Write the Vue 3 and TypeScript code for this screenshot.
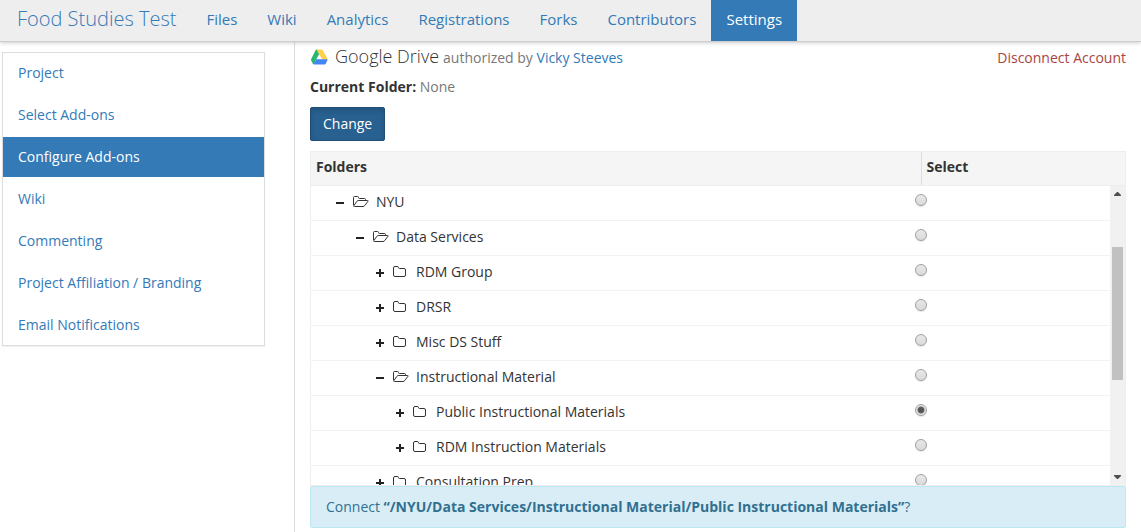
<script setup lang="ts">
import { computed, ref } from 'vue'

interface Folder {
  name: string
  path: string
  level: number
  open: boolean
}

const tabs: string[] = ['Files', 'Wiki', 'Analytics', 'Registrations', 'Forks', 'Contributors', 'Settings']
const activeTab = 'Settings'

const sections: string[] = [
  'Project',
  'Select Add-ons',
  'Configure Add-ons',
  'Wiki',
  'Commenting',
  'Project Affiliation / Branding',
  'Email Notifications',
]
const activeSection = 'Configure Add-ons'

const folders: Folder[] = [
  { name: 'NYU', path: '/NYU', level: 1, open: true },
  { name: 'Data Services', path: '/NYU/Data Services', level: 2, open: true },
  { name: 'RDM Group', path: '/NYU/Data Services/RDM Group', level: 3, open: false },
  { name: 'DRSR', path: '/NYU/Data Services/DRSR', level: 3, open: false },
  { name: 'Misc DS Stuff', path: '/NYU/Data Services/Misc DS Stuff', level: 3, open: false },
  { name: 'Instructional Material', path: '/NYU/Data Services/Instructional Material', level: 3, open: true },
  {
    name: 'Public Instructional Materials',
    path: '/NYU/Data Services/Instructional Material/Public Instructional Materials',
    level: 4,
    open: false,
  },
  {
    name: 'RDM Instruction Materials',
    path: '/NYU/Data Services/Instructional Material/RDM Instruction Materials',
    level: 4,
    open: false,
  },
  { name: 'Consultation Prep', path: '/NYU/Data Services/Consultation Prep', level: 3, open: false },
]

const selected = ref<string>(folders[6].path)
const quotedPath = computed<string>(() => `“${selected.value}”`)
</script>

<template>
  <div class="page">
    <header class="navbar">
      <a class="project-title" href="#">Food Studies Test</a>
      <nav class="tabs">
        <a v-for="tab in tabs" :key="tab" href="#" class="tab" :class="{ active: tab === activeTab }">{{ tab }}</a>
      </nav>
    </header>

    <div class="columns">
      <aside class="side">
        <nav class="side-nav">
          <a
            v-for="section in sections"
            :key="section"
            href="#"
            class="side-link"
            :class="{ active: section === activeSection }"
          >{{ section }}</a>
        </nav>
      </aside>

      <main class="content">
        <div class="heading-row">
          <h4 class="heading">
            <svg class="drive-icon" viewBox="0 0 18 16" width="18" height="16" aria-hidden="true">
              <path d="M6 .8 Q6.4 .4 7 .4 L9.2 5 L5.6 11.6 L3.8 15.2 Q3.2 15.3 2.8 14.8 L1.2 11.6 Q.8 10.8 1.2 10 L5.4 1.6 Z" fill="#2bb673" />
              <path d="M6.6 .4 H11.6 Q12.3 .4 12.7 1.1 L17.3 9.4 Q17.6 10 17.5 10.5 H12.2 Z" fill="#ffd04b" />
              <path d="M6.2 10.3 H17.5 Q17.6 10.9 17.3 11.5 L15.9 14.5 Q15.5 15.4 14.5 15.4 H4.2 Q3.7 15.4 3.5 15.2 Z" fill="#4285f4" />
            </svg>
            <span class="service">Google Drive</span>
            <small class="authorized">authorized by <a href="#">Vicky Steeves</a></small>
          </h4>
          <a class="disconnect" href="#">Disconnect Account</a>
        </div>

        <p class="current"><strong>Current Folder:</strong> <span class="muted">None</span></p>
        <button type="button" class="change">Change</button>

        <div class="tree">
          <table class="grid">
            <thead>
              <tr class="head-row">
                <th scope="col">Folders</th>
                <th scope="col" class="select-head">Select</th>
              </tr>
            </thead>
            <tbody class="body">
              <tr v-for="folder in folders" :key="folder.path" class="row">
                <td class="folder" :class="`level-${folder.level}`">
                  <button type="button" class="toggle" :aria-label="folder.open ? 'Collapse' : 'Expand'">
                    <svg viewBox="0 0 8 8" width="8" height="8" aria-hidden="true">
                      <path :d="folder.open ? 'M0 3h8v2H0z' : 'M0 3h3V0h2v3h3v2H5v3H3V5H0z'" fill="#222" />
                    </svg>
                  </button>
                  <span class="icon">
                    <svg v-if="folder.open" viewBox="0 0 16 11" width="16" height="11" aria-hidden="true">
                      <path
                        d="M12.5 4.5V3.5Q12.5 2.5 11.5 2.5H6.5Q5.5 2.5 5.5 1.5Q5.5 .5 4.5 .5H1.5Q.5 .5 .5 1.5V9.2M5.2 4.5H14.4Q15.6 4.5 14.9 5.4L11.8 9.5Q11.1 10.5 10 10.5H1.6Q.2 10.5 .9 9.5L4 5.2Q4.5 4.5 5.2 4.5Z"
                        fill="none"
                        stroke="#333"
                      />
                    </svg>
                    <svg v-else viewBox="0 0 13 11" width="13" height="11" aria-hidden="true">
                      <path
                        d="M.5 2Q.5 .5 2 .5H4Q5.5 .5 5.5 1.5Q5.5 2.5 6.5 2.5H11Q12.5 2.5 12.5 4V9Q12.5 10.5 11 10.5H2Q.5 10.5 .5 9Z"
                        fill="none"
                        stroke="#333"
                      />
                    </svg>
                  </span>
                  <span>{{ folder.name }}</span>
                </td>
                <td class="choice">
                  <input
                    v-model="selected"
                    type="radio"
                    name="folder"
                    class="radio"
                    :value="folder.path"
                    :aria-label="folder.name"
                  />
                </td>
              </tr>
            </tbody>
          </table>
          <div class="scrollbar" aria-hidden="true">
            <svg class="arrow" viewBox="0 0 15 17" width="15" height="17"><path d="M4 10h7v-1L8 6H7L4 9z" fill="#505050" /></svg>
            <div class="before"></div>
            <div class="thumb"></div>
            <div class="after"></div>
            <svg class="arrow" viewBox="0 0 15 17" width="15" height="17"><path d="M4 7h7v1L8 11H7L4 8z" fill="#505050" /></svg>
          </div>
        </div>

        <div class="notice" role="status">Connect <strong>{{ quotedPath }}</strong>?</div>
      </main>
    </div>
  </div>
</template>

<style>
body {
  margin: 0;
  background: #fff;
}
</style>

<style scoped>
.page {
  display: flex;
  flex-direction: column;
  min-height: 100vh;
  color: #333;
  font: 14px/20px "Open Sans", "Noto Sans", sans-serif;
}
a {
  color: #337ab7;
  text-decoration: none;
}
.navbar {
  position: relative;
  z-index: 1;
  display: flex;
  background: #eee;
  border-bottom: 1px solid #ccc;
  box-shadow: 0 1px 4px rgba(0, 0, 0, 0.2);
}
.project-title {
  padding: 7px 15px 10px 17px;
  font-size: 20px;
  font-weight: 300;
  line-height: 24px;
  white-space: nowrap;
}
.tabs {
  display: flex;
  font-size: 15px;
}
.tab {
  padding: 9px 15px 12px;
}
.tab.active {
  background: #337ab7;
  color: #fff;
}
.columns {
  display: flex;
  flex: 1;
}
.side {
  box-sizing: border-box;
  width: 295px;
  flex-shrink: 0;
  padding: 10px 29px 0 2px;
  border-right: 1px solid #ddd;
}
.side-nav {
  display: flex;
  flex-direction: column;
  gap: 2px;
  border: 1px solid #ddd;
  box-shadow: 0 1px 1px rgba(0, 0, 0, 0.05);
}
.side-link {
  padding: 10px 15px;
}
.side-link.active {
  background: #337ab7;
  color: #fff;
}
.content {
  flex: 1;
  min-width: 0;
  padding: 2px 15px 4px;
}
.heading-row {
  display: flex;
  justify-content: space-between;
  align-items: baseline;
}
.heading {
  display: flex;
  align-items: baseline;
  margin: 0;
  font-size: 18px;
  font-weight: 300;
  line-height: 24px;
}
.drive-icon {
  align-self: center;
  margin-right: 7px;
}
.authorized {
  margin-left: 4px;
  color: #777;
  font-size: 14px;
  font-weight: 400;
}
.disconnect {
  color: #a94442;
}
.current {
  margin: 7px 0 10px;
}
.muted {
  color: #777;
}
.change {
  display: block;
  padding: 6px 12px;
  border: 1px solid #204d74;
  border-radius: 2px;
  background: #286090;
  box-shadow: inset 0 3px 5px rgba(0, 0, 0, 0.125);
  color: #fff;
  font: inherit;
}
.tree {
  position: relative;
  margin-top: 10px;
  border: 1px solid #eee;
}
.grid {
  display: block;
}
.grid thead {
  display: block;
}
.head-row {
  display: grid;
  grid-template-columns: 3fr 1fr;
  background: #f5f5f5;
  border-bottom: 1px solid #eee;
}
.head-row th {
  padding: 5px 5px 8px;
  font-weight: 700;
  text-align: left;
}
.head-row .select-head {
  border-left: 1px solid #ddd;
  margin-left: -1px;
}
.body {
  display: block;
  max-height: 299px;
  margin-right: 15px;
  overflow: hidden;
}
.row {
  display: grid;
  grid-template-columns: 3fr 1fr;
  border-bottom: 1px solid #f3f3f3;
}
.row td {
  padding: 0;
}
.row .folder {
  display: flex;
  align-items: center;
  height: 32px;
  padding-bottom: 2px;
}
.folder.level-1 {
  padding-left: 25px;
}
.folder.level-2 {
  padding-left: 45px;
}
.folder.level-3 {
  padding-left: 65px;
}
.folder.level-4 {
  padding-left: 85px;
}
.toggle {
  display: flex;
  width: 17px;
  padding: 2px 0 0;
  border: 0;
  background: none;
}
.icon {
  display: flex;
  width: 23px;
  padding-bottom: 1px;
}
.row .choice {
  padding: 8px 5px 0;
}
.radio {
  appearance: none;
  display: block;
  box-sizing: border-box;
  width: 12px;
  height: 12px;
  margin: 0;
  border: 1px solid #a0a0a0;
  border-radius: 50%;
  background: linear-gradient(#e8e8e8, #dadada);
  box-shadow: 0 1px 1px rgba(0, 0, 0, 0.1);
}
.radio:checked {
  background: radial-gradient(circle, #555 0 2px, #666 3px, #e4e4e4 4px);
}
.scrollbar {
  position: absolute;
  top: 34px;
  right: 0;
  bottom: 0;
  display: flex;
  flex-direction: column;
  width: 15px;
  background: #f1f1f1;
}
.arrow {
  flex-shrink: 0;
}
.before {
  flex: 44;
}
.thumb {
  flex: 133;
  margin: 0 2px;
  background: #c1c1c1;
}
.after {
  flex: 88;
}
.notice {
  padding: 10px 15px;
  border: 1px solid #bce8f1;
  border-radius: 2px;
  background: #d9edf7;
  color: #31708f;
}
</style>
